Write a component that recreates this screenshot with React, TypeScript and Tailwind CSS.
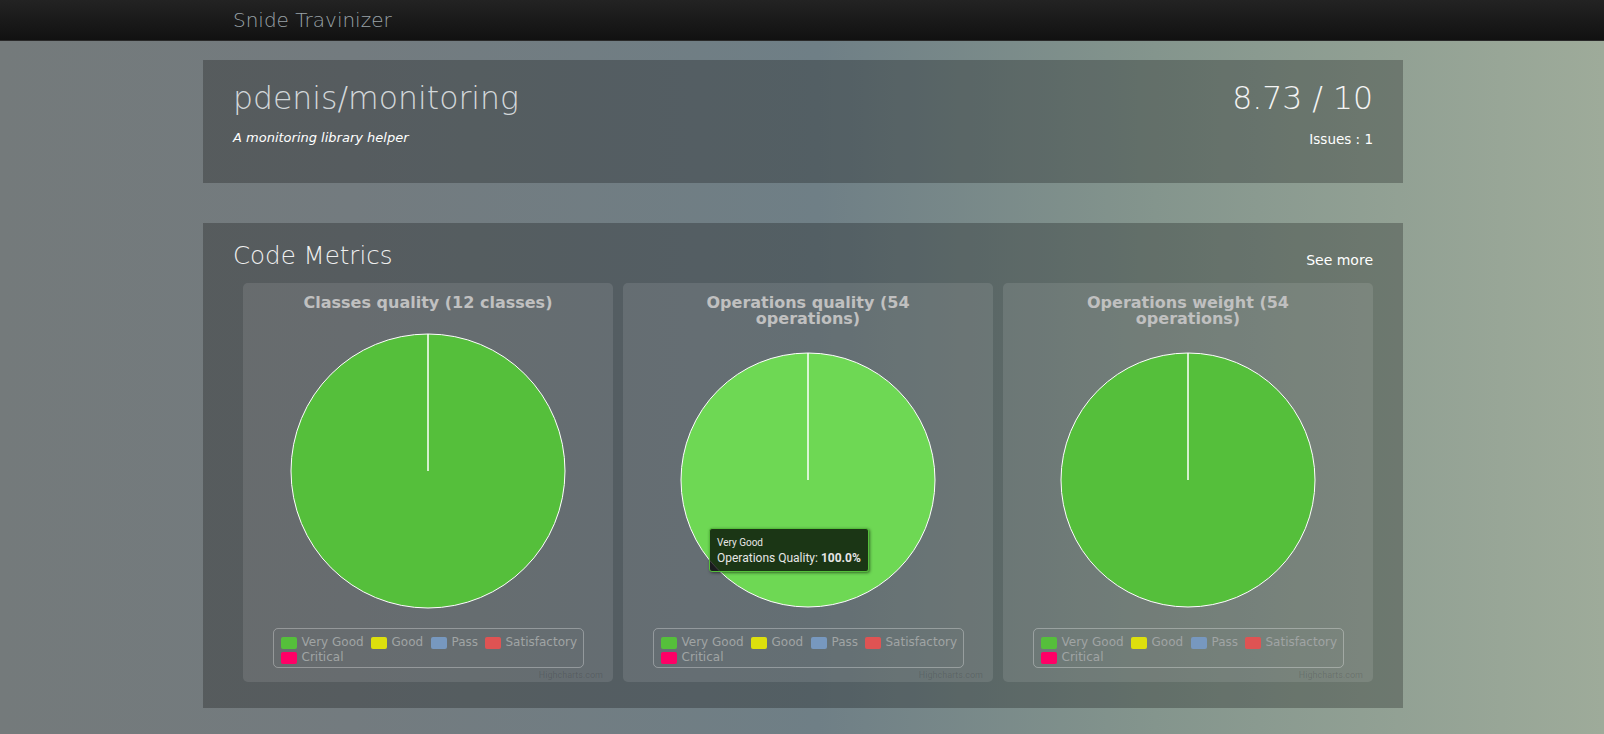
import type { ReactElement } from 'react'

type Chart = {
  title: string[]
  r: number
  cy: number
  svgHeight: number
  fill: string
  tooltip?: boolean
}

const legendTop = [
  { label: 'Very Good', color: 'bg-[#55BF3B]', width: 'w-[90px]' },
  { label: 'Good', color: 'bg-[#DDDF0D]', width: 'w-[60px]' },
  { label: 'Pass', color: 'bg-[#7798BF]', width: 'w-[54px]' },
  { label: 'Satisfactory', color: 'bg-[#DF5353]', width: 'w-auto' },
]

const charts: Chart[] = [
  { title: ['Classes quality (12 classes)'], r: 137, cy: 160, svgHeight: 317, fill: '#55BF3B' },
  { title: ['Operations quality (54', 'operations)'], r: 127, cy: 153, svgHeight: 301, fill: '#6ED854', tooltip: true },
  { title: ['Operations weight (54', 'operations)'], r: 127, cy: 153, svgHeight: 301, fill: '#55BF3B' },
]

function Pie({ r, cy, height, fill }: { r: number; cy: number; height: number; fill: string }): ReactElement {
  const cx = 185
  return (
    <svg width={370} height={height} className="block">
      <circle cx={cx} cy={cy} r={r} fill={fill} stroke="#ffffff" strokeWidth={1} />
      <line x1={cx} y1={cy} x2={cx} y2={cy - r} stroke="#ffffff" strokeWidth={1.5} />
    </svg>
  )
}

function LegendItem({ label, color, width }: { label: string; color: string; width: string }): ReactElement {
  return (
    <div className={`flex shrink-0 items-center gap-[5px] whitespace-nowrap ${width}`}>
      <span className={`h-[12px] w-[16px] shrink-0 rounded-[2px] ${color}`} />
      <span>{label}</span>
    </div>
  )
}

function ChartCard({ chart }: { chart: Chart }): ReactElement {
  return (
    <div className="relative h-[399px] w-[370px] rounded-[5px] bg-white/10 pt-[12px]">
      <div className="text-center font-['DejaVu_Sans',sans-serif] text-[16px] font-bold leading-[16px] text-[#c0c0c0]">
        {chart.title.map((line) => (
          <div key={line}>{line}</div>
        ))}
      </div>
      <Pie r={chart.r} cy={chart.cy} height={chart.svgHeight} fill={chart.fill} />
      <div className="mx-auto h-[40px] w-[311px] rounded-[5px] border border-white/30 pl-[7px] pt-[6px] font-['DejaVu_Sans',sans-serif] text-[12px] leading-[15px] text-[#a0a4a4]">
        <div className="flex">
          {legendTop.map((item) => (
            <LegendItem key={item.label} {...item} />
          ))}
        </div>
        <div className="flex">
          <LegendItem label="Critical" color="bg-[#ff0066]" width="w-auto" />
        </div>
      </div>
      <div className="mt-[2px] pr-[10px] text-right font-['Roboto',sans-serif] text-[9px] leading-[10px] text-black/15">
        Highcharts.com
      </div>
      {chart.tooltip ? (
        <div className="absolute left-[86px] top-[245px] rounded-[3px] border border-[#55BF3B] bg-black/75 px-[7px] pb-[5px] pt-[7px] font-['Roboto',sans-serif] text-[#e6e6e6] shadow-[1px_1px_3px_rgba(0,0,0,0.5)]">
          <div className="text-[10px] leading-[14px]">Very Good</div>
          <div className="whitespace-nowrap text-[12px] leading-[16px]">
            Operations Quality: <b>100.0%</b>
          </div>
        </div>
      ) : null}
    </div>
  )
}

export default function App(): ReactElement {
  return (
    <div className="h-[734px] w-full overflow-hidden bg-[linear-gradient(90deg,#747a7b_0%,#737b7f_22%,#6f7f86_51%,#84958d_72%,#9eab9a_100%)] font-['DejaVu_Sans',sans-serif]">
      <div className="h-[41px] border-b border-[#2a2a2a] bg-[linear-gradient(180deg,#232323,#111111)]">
        <div className="mx-auto w-[1200px] translate-x-px px-[30px] font-['DejaVu_Sans',sans-serif] text-[20px] font-extralight leading-[40px] text-[#9aa3a8]">
          Snide Travinizer
        </div>
      </div>

      <div className="mx-auto w-[1200px] translate-x-px pt-[19px]">
        <div className="flex h-[123px] justify-between bg-black/25 px-[30px] pt-[20px]">
          <div>
            <div className="text-[31.5px] font-extralight leading-[36px] text-[#d2d7da]">pdenis/monitoring</div>
            <div className="mt-[13px] text-[13px] italic leading-[18px] text-white">A monitoring library helper</div>
          </div>
          <div className="flex flex-col items-end">
            <div className="text-[31.5px] font-extralight leading-[36px] text-[#f4f4f4]">8.73 / 10</div>
            <div className="mt-[14px] text-[13.5px] leading-[18px] text-white">Issues : 1</div>
          </div>
        </div>

        <div className="mt-[40px] h-[485px] bg-black/25 px-[30px] pt-[18px]">
          <div className="flex items-end justify-between">
            <h2 className="text-[24.5px] font-extralight leading-[30px] text-[#f0f0f0]">Code Metrics</h2>
            <a className="pb-[2px] text-[14px] leading-[18px] text-white">See more</a>
          </div>
          <div className="ml-[10px] mt-[12px] flex gap-[10px]">
            {charts.map((chart) => (
              <ChartCard key={chart.title.join(' ')} chart={chart} />
            ))}
          </div>
        </div>
      </div>
    </div>
  )
}
